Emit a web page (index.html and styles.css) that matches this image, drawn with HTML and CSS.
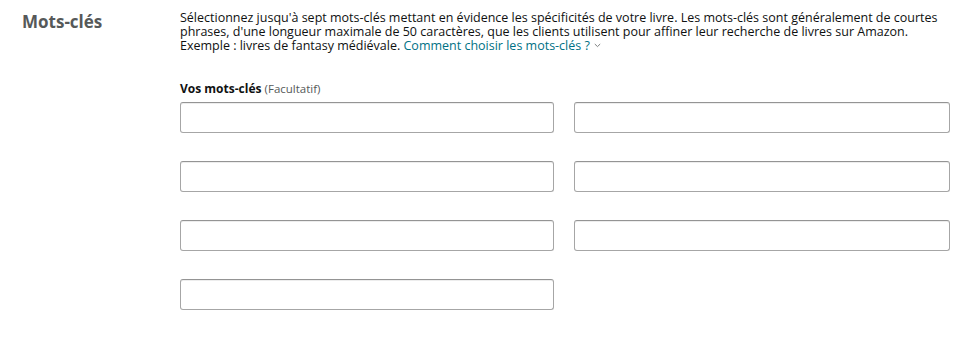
FILE: index.html
```html
<html lang="fr">
<head>
    <meta charset="UTF-8">
    <title>Mots-clés</title>
    <link rel="stylesheet" href="styles.css">
</head>
<body>
    <section class="keywords">
        <h2 class="keywords-title">Mots-clés</h2>
        <div class="keywords-body">
            <p class="keywords-help">Sélectionnez jusqu'à sept mots-clés mettant en évidence les spécificités de votre livre. Les mots-clés sont généralement de courtes phrases, d'une longueur maximale de 50 caractères, que les clients utilisent pour affiner leur recherche de livres sur Amazon. Exemple : livres de fantasy médiévale. <a href="#" class="help-link">Comment choisir les mots-clés ?<svg class="chevron" width="7" height="5" viewBox="0 0 7 5"><path d="M0.8 1 L3.5 3.6 L6.2 1" fill="none" stroke="#6f7373" stroke-width="0.9"/></svg></a></p>

            <label class="keywords-label" for="kw1">Vos mots-clés <span class="optional">(Facultatif)</span></label>
            <div class="keywords-grid">
                <input type="text" id="kw1">
                <input type="text" id="kw2">
                <input type="text" id="kw3">
                <input type="text" id="kw4">
                <input type="text" id="kw5">
                <input type="text" id="kw6">
                <input type="text" id="kw7">
            </div>
        </div>
    </section>
</body>
</html>
```

FILE: styles.css
```css
:root {
    --text: #0f1111;
    --muted: #565959;
    --link: #007185;
    --border: #a6a6a6;
}

body {
    margin: 0;
    font-family: "Open Sans", "Noto Sans", sans-serif;
    color: var(--text);
    background: #fff;
}

.keywords {
    display: grid;
    grid-template-columns: 180px 770px;
    padding-top: 11px;
}

.keywords-title {
    margin: 0;
    padding-left: 22px;
    font-size: 17px;
    font-weight: 700;
    color: var(--muted);
    line-height: 22px;
}

.keywords-help {
    margin: 0;
    font-size: 12.5px;
    line-height: 14px;
}

.help-link {
    color: var(--link);
    text-decoration: none;
}

.chevron {
    margin-left: 4px;
    vertical-align: 2px;
}

.keywords-label {
    display: block;
    margin-top: 29px;
    font-size: 12px;
    font-weight: 700;
    line-height: 14px;
}

.optional {
    font-size: 11.5px;
    font-weight: 400;
    color: var(--muted);
}

.keywords-grid {
    display: grid;
    grid-template-columns: 374px 376px;
    column-gap: 20px;
    row-gap: 28px;
    margin-top: 6px;
}

.keywords-grid input {
    height: 31px;
    box-sizing: border-box;
    margin: 0;
    border: 1px solid var(--border);
    border-top-color: #949494;
    border-radius: 3px;
    box-shadow: 0 1px 0 rgba(0, 0, 0, 0.07) inset;
    font-size: 13px;
    padding: 3px 7px;
}
```
